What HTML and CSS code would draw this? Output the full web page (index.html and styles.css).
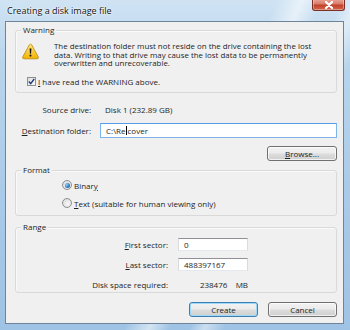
FILE: index.html
```html
<!DOCTYPE html>
<html>
<head>
<meta charset="utf-8">
<link rel="stylesheet" href="styles.css">
</head>
<body>
<div class="window">
  <div class="titlebar">
    <span class="title">Creating a disk image file</span>
    <span class="close"><svg width="12" height="8" viewBox="0 0 12 8"><path d="M3 1 L9 7 M9 1 L3 7" stroke="#fff" stroke-width="2.2" stroke-linecap="round"/></svg></span>
  </div>
  <div class="client">
    <div class="group warning">
      <span class="legend">Warning</span>
      <div class="warn-row">
        <svg class="warn-icon" width="17" height="17" viewBox="0 0 17 16">
          <defs><linearGradient id="yg" x1="0" y1="0" x2="0" y2="1"><stop offset="0" stop-color="#ffe680"/><stop offset="1" stop-color="#f2b100"/></linearGradient></defs>
          <path d="M7.3 1.4 Q8.5 -0.2 9.7 1.4 L16.2 13.3 Q16.9 15.2 15 15.3 L2 15.3 Q0.1 15.2 0.8 13.3 Z" fill="url(#yg)" stroke="#b8860b" stroke-width="0.8"/>
          <path d="M7.6 5 L9.4 5 L9 10.2 L8 10.2 Z" fill="#111"/>
          <rect x="7.6" y="11.2" width="1.8" height="1.8" rx="0.4" fill="#111"/>
        </svg>
        <p class="warn-text">The destination folder must not reside on the drive containing the lost<br>data. Writing to that drive may cause the lost data to be permanently<br>overwritten and unrecoverable.</p>
      </div>
      <div class="check-row">
        <span class="checkbox"><svg width="7" height="7" viewBox="0 0 7 7"><path d="M0.8 3.6 L2.7 5.6 L6.2 1" fill="none" stroke="#1d3c7a" stroke-width="1.4"/></svg></span>
        <span><u>I</u> have read the WARNING above.</span>
      </div>
    </div>

    <div class="row source">
      <span class="lbl">Source drive:</span>
      <span class="value">Disk 1 (232.89 GB)</span>
    </div>
    <div class="row dest">
      <span class="lbl"><u>D</u>estination folder:</span>
      <div class="input wide">C:\Re<span class="caret"></span>cover</div>
    </div>
    <div class="browse-row">
      <button class="btn browse"><u>B</u>rowse...</button>
    </div>

    <div class="group format">
      <span class="legend">Format</span>
      <div class="radio-row"><span class="radio checked"></span><span>Binar<u>y</u></span></div>
      <div class="radio-row"><span class="radio"></span><span><u>T</u>ext (suitable for human viewing only)</span></div>
    </div>

    <div class="group range">
      <span class="legend">Range</span>
      <div class="range-grid">
        <span class="rlbl"><u>F</u>irst sector:</span>
        <div class="input small">0</div>
        <span class="rlbl"><u>L</u>ast sector:</span>
        <div class="input small">488397167</div>
        <span class="rlbl">Disk space required:</span>
        <span class="space">238476&nbsp;&nbsp;&nbsp;&nbsp;MB</span>
      </div>
    </div>

    <div class="actions">
      <button class="btn default">Create</button>
      <button class="btn">Cancel</button>
    </div>
  </div>
</div>
</body>
</html>
```
FILE: styles.css
```css
* { box-sizing: border-box; }
html, body { margin: 0; padding: 0; }
body {
  width: 350px;
  height: 330px;
  overflow: hidden;
  font-family: "Open Sans", "Noto Sans", sans-serif;
  font-size: 8px;
  color: #1e1e1e;
}
.window {
  width: 350px;
  height: 330px;
  padding: 0 6px 6px 5px;
  display: flex;
  flex-direction: column;
  background:
    linear-gradient(115deg, rgba(255,255,255,0) 55%, rgba(255,255,255,0.55) 60%, rgba(255,255,255,0) 64%, rgba(255,255,255,0) 68%, rgba(255,255,255,0.45) 71%, rgba(255,255,255,0) 75%),
    linear-gradient(180deg, #cfe3f3 0%, #b7d4ec 20%, #a9cae8 60%, #9fc3e4 100%);
}
.titlebar {
  height: 21px;
  display: flex;
  justify-content: space-between;
  align-items: flex-start;
}
.title {
  margin: 4px 0 0 2px;
  font-size: 9px;
  color: #111;
  text-shadow: 0 0 3px #fff, 0 0 2px #fff;
  white-space: nowrap;
}
.close {
  width: 33px;
  height: 12px;
  margin-top: -1px;
  margin-right: -1px;
  border: 1px solid #7a3026;
  border-top: none;
  border-radius: 0 0 3px 3px;
  background: linear-gradient(180deg, #eaa99c 0%, #d87b69 45%, #c2412a 55%, #d2664e 100%);
  display: flex;
  align-items: center;
  justify-content: center;
  box-shadow: inset 0 0 0 1px rgba(255,255,255,0.35);
}
.client {
  flex: 1;
  background: #f0f0f0;
  border: 1px solid #6f8399;
  display: flex;
  flex-direction: column;
}
.group {
  position: relative;
  margin: 0 6px 0 9px;
  border: 1px solid #d9d9d9;
  border-radius: 3px;
  box-shadow: inset 1px 1px 0 #fafafa;
}
.legend {
  position: absolute;
  top: -6px;
  left: 5px;
  padding: 0 2px;
  background: #f0f0f0;
  line-height: 10px;
}
.warning {
  margin-top: 8px;
  height: 63px;
  padding: 11px 6px 0 6px;
}
.warn-row {
  display: flex;
  align-items: flex-start;
}
.warn-icon { flex: none; margin-top: 1px; }
.warn-text {
  margin: 0 0 0 15px;
  line-height: 8.6px;
  font-size: 7.9px;
  white-space: nowrap;
}
.check-row {
  display: flex;
  align-items: center;
  margin: 9px 0 0 5px;
  height: 9px;
  white-space: nowrap;
}
.checkbox {
  width: 9px;
  height: 9px;
  margin-right: 2px;
  border: 1px solid #8e8f8f;
  background: linear-gradient(135deg, #dcdcdc, #fbfbfb);
  display: flex;
  align-items: center;
  justify-content: center;
}
.row {
  display: flex;
  align-items: center;
  margin-left: 9px;
  margin-right: 6px;
}
.lbl {
  width: 76px;
  text-align: right;
  margin-right: 9px;
  white-space: nowrap;
}
.source {
  margin-top: 9px;
  height: 14px;
}
.value { padding-left: 5px; }
.dest { margin-top: 7px; }
.input {
  background: #fff;
  border: 1px solid #abadb3;
  border-top-color: #8f9196;
  border-left-color: #dadbdd;
  border-right-color: #dadbdd;
  border-bottom-color: #e3e9ef;
  display: flex;
  align-items: center;
  padding-left: 5px;
  white-space: nowrap;
}
.input.wide {
  flex: 1;
  height: 15px;
  border-color: #7eb4ea;
  border-top-color: #569de5;
}
.caret {
  display: inline-block;
  width: 1px;
  height: 9px;
  background: #000;
  margin: 0 0.5px;
}
.browse-row {
  display: flex;
  justify-content: flex-end;
  margin: 8px 6px 0 0;
}
.btn {
  font: inherit;
  color: #1e1e1e;
  height: 15px;
  padding: 0;
  border: 1px solid #707070;
  border-radius: 3px;
  background: linear-gradient(180deg, #f2f2f2 0%, #ebebeb 48%, #dddddd 52%, #cfcfcf 100%);
  box-shadow: inset 0 0 0 1px rgba(255,255,255,0.7);
  display: flex;
  align-items: center;
  justify-content: center;
}
.browse { width: 70px; }
.format {
  margin-top: 9px;
  height: 46px;
  padding: 9px 0 0 46px;
}
.radio-row {
  display: flex;
  align-items: center;
  height: 10px;
  white-space: nowrap;
}
.radio-row + .radio-row { margin-top: 8px; }
.radio {
  width: 10px;
  height: 10px;
  margin-right: 2px;
  border-radius: 50%;
  border: 1px solid #8e8f8f;
  background: radial-gradient(circle at 60% 60%, #f8f8f8, #d4d4d4);
  display: flex;
  align-items: center;
  justify-content: center;
}
.radio.checked::after {
  content: "";
  width: 5px;
  height: 5px;
  border-radius: 50%;
  background: radial-gradient(circle at 35% 35%, #8ed0ff, #1f66b3 70%, #0e3f7a);
}
.range {
  margin-top: 11px;
  height: 66px;
  padding-top: 10px;
}
.range-grid {
  display: grid;
  grid-template-columns: 152px 70px;
  column-gap: 10px;
  row-gap: 7px;
  grid-auto-rows: 13px;
  align-items: center;
}
.rlbl {
  text-align: right;
  white-space: nowrap;
}
.input.small { height: 13px; }
.space {
  text-align: right;
  white-space: nowrap;
}
.actions {
  display: flex;
  justify-content: flex-end;
  gap: 10px;
  margin: 9px 6px 0 0;
}
.actions .btn { width: 69px; }
.btn.default {
  border-color: #3c7fb1;
  box-shadow: inset 0 0 0 1px #9fd8f8;
}
u { text-decoration: underline; text-underline-offset: 1px; }
```
